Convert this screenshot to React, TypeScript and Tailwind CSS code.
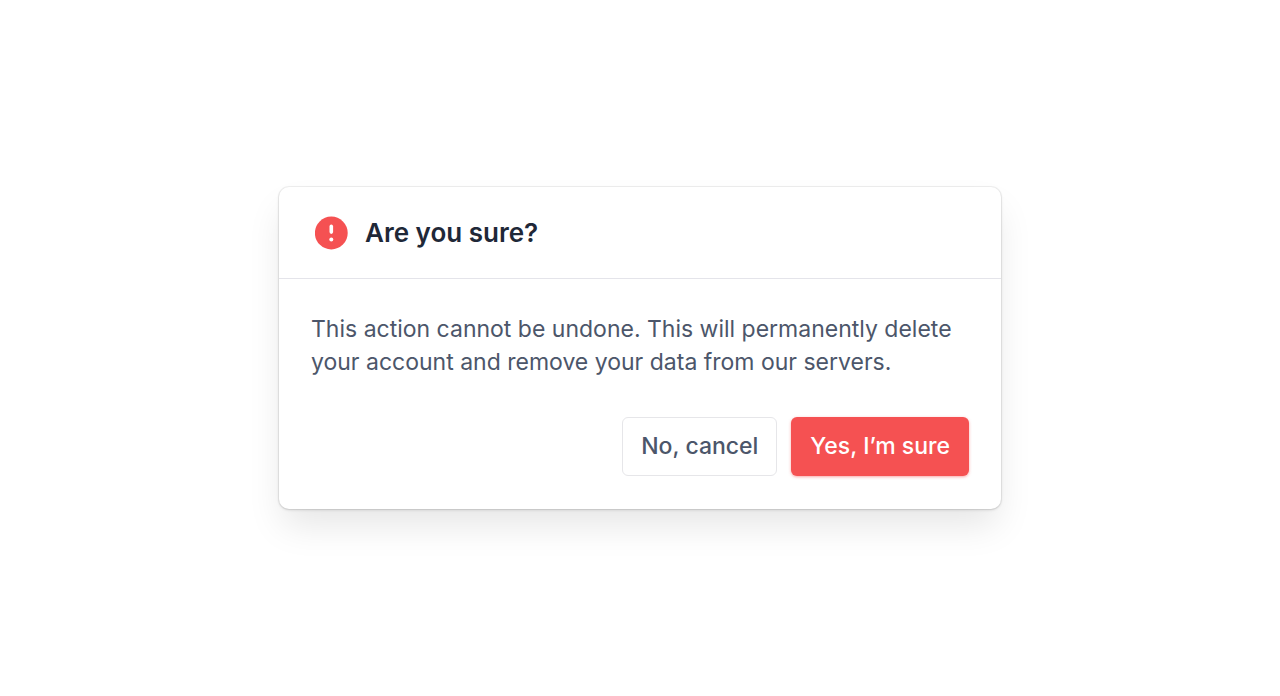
export default function App() {
  return (
    <main className="flex min-h-screen items-center justify-center bg-white p-6 font-['Inter',sans-serif]">
      <section
        role="alertdialog"
        aria-labelledby="dialog-title"
        aria-describedby="dialog-text"
        className="w-full max-w-[722px] rounded-[10px] bg-white shadow-[0_0_0_1px_rgba(0,0,0,0.05),0_1px_3px_rgba(0,0,0,0.14),0_20px_36px_-4px_rgba(0,0,0,0.1)]"
      >
        <header className="flex items-center gap-4 border-b border-[#e4e4ea] px-9 pt-7 pb-[27px]">
          <svg viewBox="0 0 34 34" className="size-[34px]" aria-hidden="true">
            <circle cx="16.3" cy="17" r="16.4" fill="#f55152" />
            <path d="M16.3 10.4v5.7" stroke="#fff" strokeWidth="3.6" strokeLinecap="round" />
            <circle cx="16.3" cy="23.4" r="2" fill="#fff" />
          </svg>
          <h1 id="dialog-title" className="text-[26px] leading-9 font-semibold text-[#1f2838]">
            Are you sure?
          </h1>
        </header>
        <div className="px-8 pt-[34px] pb-[33px]">
          <p id="dialog-text" className="text-[23px] leading-[33px] text-[#4c566a]">
            This action cannot be undone. This will permanently delete your account and remove your data from our servers.
          </p>
          <div className="mt-[38px] flex justify-end gap-3.5">
            <button type="button" className="h-[59px] rounded-md border border-[#e6e6e9] px-[18px] text-[23px] font-medium text-[#4c566a]">
              No, cancel
            </button>
            <button type="button" className="h-[59px] rounded-md bg-[#f55152] px-[19px] text-[23px] font-medium text-white shadow-[0_1px_3px_rgba(245,81,82,0.5)]">
              Yes, I’m sure
            </button>
          </div>
        </div>
      </section>
    </main>
  );
}
